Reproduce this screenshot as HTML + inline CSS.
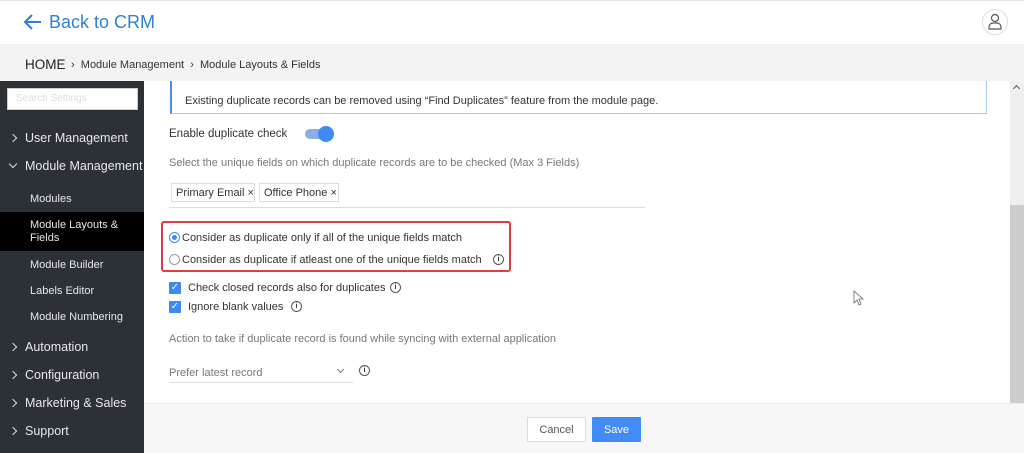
<!DOCTYPE html>
<html><head><meta charset="utf-8"><style>
*{margin:0;padding:0;box-sizing:border-box}
body{width:1024px;height:453px;overflow:hidden;position:relative;font-family:"Liberation Sans",sans-serif;background:#fff;color:#333}
.a{position:absolute;white-space:nowrap}
.sb{color:#e8e8e8;font-size:12.5px}
.sub{color:#e8e8e8;font-size:11px}
.chev{position:absolute;left:10px;width:6px;height:6px;border-right:1.5px solid #ddd;border-top:1.5px solid #ddd;transform:rotate(45deg)}
.info{position:absolute;width:13px;height:13px;border:1px solid #555;border-radius:50%;font-size:8px;line-height:11px;text-align:center;color:#333;font-weight:bold}
.cb{position:absolute;width:12px;height:12px;background:#3d8bf2;border-radius:1px;color:#fff;font-size:10px;line-height:12px;text-align:center}
</style></head><body>
<div class="a" style="left:0;top:0;width:1024px;height:1px;background:#e5e5e5"></div>
<svg class="a" style="left:23px;top:13px" width="20" height="18" viewBox="0 0 20 18"><path d="M18 9H3M9 2L2 9l7 7" fill="none" stroke="#2f7fd6" stroke-width="2"/></svg>
<div class="a" style="left:49px;top:12px;font-size:18px;color:#2f7fd6">Back to CRM</div>
<div class="a" style="left:982px;top:9px;width:26px;height:26px;border:1px solid #ddd;border-radius:50%"></div>
<svg class="a" style="left:987px;top:13px" width="16" height="18" viewBox="0 0 16 18"><circle cx="8" cy="5" r="3.5" fill="none" stroke="#555" stroke-width="1.2"/><path d="M2 16v-2a4 4 0 0 1 4-4h4a4 4 0 0 1 4 4v2z" fill="none" stroke="#555" stroke-width="1.2"/></svg>
<div class="a" style="left:0;top:44px;width:1024px;height:37px;background:#f3f3f3"></div>
<div class="a" style="left:25px;top:57px;font-size:13.5px;color:#222">HOME</div>
<div class="a" style="left:71px;top:59px;font-size:11px;color:#333">›&nbsp; Module Management &nbsp;›&nbsp; Module Layouts &amp; Fields</div>
<div class="a" style="left:0;top:81px;width:144px;height:372px;background:#2b3136"></div>
<div class="a" style="left:7px;top:88px;width:131px;height:22px;background:#fff;border:1px solid #ccc;font-size:10px;color:#ddd;padding:4px 8px">Search Settings</div>
<div class="chev" style="top:135px;transform:rotate(45deg)"></div><div class="a sb" style="left:25px;top:131px">User Management</div>
<div class="chev" style="top:161px;transform:rotate(135deg)"></div><div class="a sb" style="left:25px;top:159px">Module Management</div>
<div class="a sub" style="left:30px;top:193px">Modules</div>
<div class="a" style="left:0;top:212px;width:144px;height:39px;background:#000"></div>
<div class="a sub" style="left:30px;top:219px;line-height:13px">Module Layouts &amp;<br>Fields</div>
<div class="a sub" style="left:30px;top:259px">Module Builder</div>
<div class="a sub" style="left:30px;top:285px">Labels Editor</div>
<div class="a sub" style="left:30px;top:311px">Module Numbering</div>
<div class="chev" style="top:344px"></div><div class="a sb" style="left:25px;top:340px">Automation</div>
<div class="chev" style="top:372px"></div><div class="a sb" style="left:25px;top:368px">Configuration</div>
<div class="chev" style="top:400px"></div><div class="a sb" style="left:25px;top:396px">Marketing &amp; Sales</div>
<div class="chev" style="top:428px"></div><div class="a sb" style="left:25px;top:424px">Support</div>
<div class="a" style="left:170px;top:81px;width:817px;height:33px;border-left:2px solid #4a8df0;border-right:1px solid #a8c8f8;border-bottom:1px solid #a8c8f8"></div>
<div class="a" style="left:185px;top:95px;font-size:11px;color:#333">Existing duplicate records can be removed using “Find Duplicates” feature from the module page.</div>
<div class="a" style="left:169px;top:128px;font-size:11.5px;color:#333">Enable duplicate check</div>
<div class="a" style="left:305px;top:129px;width:28px;height:10px;border-radius:5px;background:#8aaee8"></div>
<div class="a" style="left:318px;top:126px;width:16px;height:16px;border-radius:50%;background:#3d8bf2"></div>
<div class="a" style="left:169px;top:157px;font-size:11px;color:#777">Select the unique fields on which duplicate records are to be checked (Max 3 Fields)</div>
<div class="a" style="left:171px;top:183px;width:84px;height:19px;border:1px solid #ddd;font-size:11px;padding:3px 4px;color:#333">Primary Email ×</div>
<div class="a" style="left:259px;top:183px;width:80px;height:19px;border:1px solid #ddd;font-size:11px;padding:3px 4px;color:#333">Office Phone ×</div>
<div class="a" style="left:169px;top:207px;width:476px;height:1px;background:#ddd"></div>
<div class="a" style="left:161px;top:221px;width:350px;height:51px;border:2px solid #e03c45;border-radius:3px"></div>
<div class="a" style="left:169px;top:232px;width:11px;height:11px;border:1px solid #3d8bf2;border-radius:50%"></div>
<div class="a" style="left:172px;top:235px;width:5px;height:5px;background:#3d8bf2;border-radius:50%"></div>
<div class="a" style="left:182px;top:232px;font-size:11px;color:#333">Consider as duplicate only if all of the unique fields match</div>
<div class="a" style="left:169px;top:254px;width:11px;height:11px;border:1px solid #999;border-radius:50%"></div>
<div class="a" style="left:182px;top:254px;font-size:11px;color:#333">Consider as duplicate if atleast one of the unique fields match</div>
<div class="info" style="left:493px;top:254px;width:11px;height:11px;font-size:7px;line-height:9px">i</div>
<div class="cb" style="left:169px;top:282px">✓</div>
<div class="a" style="left:188px;top:282px;font-size:11px;color:#333">Check closed records also for duplicates</div>
<div class="info" style="left:390px;top:282px;width:11px;height:11px;font-size:7px;line-height:9px">i</div>
<div class="cb" style="left:169px;top:301px">✓</div>
<div class="a" style="left:188px;top:301px;font-size:11px;color:#333">Ignore blank values</div>
<div class="info" style="left:291px;top:301px;width:11px;height:11px;font-size:7px;line-height:9px">i</div>
<div class="a" style="left:169px;top:333px;font-size:11px;color:#777">Action to take if duplicate record is found while syncing with external application</div>
<div class="a" style="left:169px;top:367px;font-size:11px;color:#777">Prefer latest record</div>
<div class="a" style="left:338px;top:367px;width:5px;height:5px;border-right:1px solid #777;border-bottom:1px solid #777;transform:rotate(45deg)"></div>
<div class="a" style="left:169px;top:382px;width:184px;height:1px;background:#ddd"></div>
<div class="info" style="left:359px;top:365px;width:11px;height:11px;font-size:7px;line-height:9px">i</div>
<div class="a" style="left:1010px;top:81px;width:14px;height:322px;background:#efefef"></div>
<div class="a" style="left:1010px;top:205px;width:14px;height:198px;background:#cdcdcd"></div>
<div class="a" style="left:1014px;top:86px;width:5px;height:5px;border-left:1.5px solid #555;border-top:1.5px solid #555;transform:rotate(45deg)"></div>
<svg class="a" style="left:853px;top:290px" width="12" height="16" viewBox="0 0 12 16"><path d="M1 1v12l3-3 2 5 2-1-2-5h4z" fill="#fff" stroke="#666" stroke-width="0.8"/></svg>
<div class="a" style="left:144px;top:403px;width:880px;height:50px;background:#f7f7f7;border-top:1px solid #eaeaea"></div>
<div class="a" style="left:527px;top:417px;width:59px;height:25px;background:#fff;border:1px solid #ddd;font-size:11px;color:#555;text-align:center;line-height:24px">Cancel</div>
<div class="a" style="left:592px;top:417px;width:49px;height:25px;background:#428bf5;font-size:11px;color:#fff;text-align:center;line-height:26px;border-radius:1px">Save</div>
</body></html>
